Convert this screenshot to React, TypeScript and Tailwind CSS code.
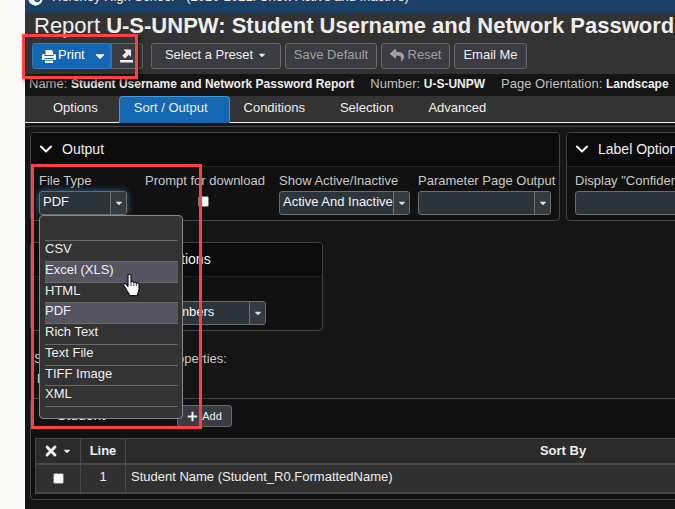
import { useState } from 'react';
import type { ReactNode } from 'react';
import { FaCaretDown, FaReply, FaPlus, FaTimes } from 'react-icons/fa';
import { ChevronDown } from 'lucide-react';

const fileTypes = ['', 'CSV', 'Excel (XLS)', 'HTML', 'PDF', 'Rich Text', 'Text File', 'TIFF Image', 'XML'];
const tabs = ['Options', 'Sort / Output', 'Conditions', 'Selection', 'Advanced'];

const btn = 'flex h-[26px] items-center justify-center whitespace-nowrap rounded-[3px] border border-[#66666b] bg-[#3b3b42]';

function PrinterIcon() {
  return (
    <svg viewBox="0 0 14 13" className="h-[13px] w-[14px] shrink-0" fill="currentColor">
      <path d="M3.500 0h6L11 1.500V5H3.500z" />
      <path d="M1.500 4H2.500V6h9V4h1A1.500 1.500 0 0 1 14 5.500V10h-2.500V8h-9v2H0V5.500A1.500 1.500 0 0 1 1.500 4z" />
      <path d="M3 9h8v1.300H3zM3 11h8v2H3z" />
    </svg>
  );
}

function ExportIcon() {
  return (
    <svg viewBox="0 0 13 14" className="h-[14px] w-[13px]" fill="currentColor">
      <path d="M3.500 0.500H11V8L8.700 5.800 5 9.500 2.300 6.800 6 3.100z" />
      <path d="M0 11h13v2.500H0z" />
    </svg>
  );
}

function HandCursor() {
  return (
    <svg viewBox="0 0 18 24" className="pointer-events-none absolute left-[123px] top-[273px] z-30 h-6 w-[18px]">
      <path
        d="M5 2.500C5 .6 8 .6 8 2.500V9c.5-.9 2.600-.7 2.800.5.700-.8 2.400-.5 2.600.8.900-.7 2.600-.2 2.600 1.300v5c0 2-1.500 3.500-1.500 6H6.500c0-2-2.300-4-3.300-6.200L.8 12.600c-.8-1.700 1.200-2.900 2.400-1.500L5 13.400z"
        fill="#fff"
        stroke="#15152a"
        strokeWidth="1.200"
        strokeLinejoin="round"
      />
      <path d="M8 9v4M10.800 10v3M13.400 11v2" stroke="#15152a" strokeWidth="0.8" />
    </svg>
  );
}

function Panel({ title, className, children }: { title: string; className: string; children: ReactNode }) {
  return (
    <section className={`shrink-0 rounded-[4px] border border-[#444] bg-[#111] ${className}`}>
      <h2 className="flex h-[34px] items-center gap-1.5 rounded-t-[3px] border-b border-[#222] bg-[#0b0b0b] pb-0.5 pl-[5px] text-[14px] text-[#f0f0f0]">
        <ChevronDown className="h-5 w-5" strokeWidth={2.5} />
        {title}
      </h2>
      <div className="flex gap-2 px-2 pb-[5px] pt-1">{children}</div>
    </section>
  );
}

function SelectField({ id, label, value, width, active }: { id: string; label: string; value: string; width: string; active?: boolean }) {
  return (
    <div className="shrink-0">
      <label htmlFor={id} className="block h-5 whitespace-nowrap leading-5 text-[#c8c8c8]">{label}</label>
      <div className={`relative ${width} ${active ? 'rounded-[3px] shadow-[0_0_7px_#35658f]' : ''}`}>
        <select id={id} defaultValue={value} className="block h-6 w-full appearance-none rounded-[3px] border border-[#6d6d6d] bg-[#2b333b] pb-0.5 pl-[3px] pr-4 text-[#f4f4f4]">
          <option>{value}</option>
        </select>
        <span className="pointer-events-none absolute inset-y-px right-px flex w-4 items-center justify-center rounded-r-[2px] border-l border-[#6d6d6d] bg-[#343a41]">
          <FaCaretDown className="h-2.5 w-2.5 text-[#ddd]" />
        </span>
      </div>
    </div>
  );
}

export default function App() {
  const [tab, setTab] = useState('Sort / Output');
  const [fileType, setFileType] = useState('PDF');

  return (
    <div className="relative flex min-h-screen overflow-hidden bg-[#fafaf9] font-['Liberation_Sans',Arial,sans-serif] text-[13px] leading-4 text-[#eee]">
      <main className="ml-[25px] min-w-[986px] flex-1 bg-[#151515]">
        <header className="flex h-[13px] items-end overflow-hidden bg-[#1b4066]">
          <div className="flex h-[22px] items-start pl-0.5">
            <svg viewBox="0 0 18 18" className="h-4 w-[17px]">
              <circle cx="9" cy="8.500" r="8" fill="#f4f4f4" />
              <path d="M5 9c1-6 10-7 9-1s-7 3-5 0" fill="none" stroke="#1b4066" strokeWidth="2" />
            </svg>
          </div>
          <p className="flex h-6 gap-3 whitespace-nowrap pl-2 leading-4">
            <span>Hershey High School</span>
            <span>(2020-2021: Show Active and Inactive)</span>
          </p>
        </header>

        <div className="bg-[#333] pb-[5px]">
          <h1 className="h-[30px] whitespace-nowrap pl-[9px] text-[22px] leading-[26px]">
            Report <b>U-S-UNPW: Student Username and Network Password</b>
          </h1>
          <div className="flex gap-1 pl-[7px]">
            <div className="mr-1 flex">
              <button className="flex h-[26px] w-[79px] items-center rounded-l-[3px] border border-[#2d79bd] bg-[#1567b3] pl-[9px] text-white">
                <PrinterIcon />
                <span className="ml-0.5 pb-0.5">Print</span>
                <FaCaretDown className="ml-2 h-3.5 w-3.5" />
              </button>
              <button aria-label="Export" className="flex h-[26px] w-8 items-center rounded-r-[3px] border border-[#66666b] bg-[#3b3b42] pl-2">
                <ExportIcon />
              </button>
            </div>
            <button className={`${btn} w-[130px] gap-1 pb-0.5`}>Select a Preset <FaCaretDown className="h-2.5 w-2.5" /></button>
            <button className={`${btn} w-[92px] pb-0.5 text-[#a0a0a0]`}>Save Default</button>
            <button className={`${btn} w-[69px] gap-1 pb-0.5 text-[#a0a0a0]`}><FaReply className="h-3.5 w-3.5" />Reset</button>
            <button className={`${btn} w-[73px] pb-0.5`}>Email Me</button>
          </div>
        </div>

        <p className="flex h-[22px] items-center gap-4 whitespace-nowrap pb-0.5 pl-1 text-[#c0c0c0]">
          <span>Name: <b className="text-[12px] text-[#eee]">Student Username and Network Password Report</b></span>
          <span>Number: <b className="text-[12px] text-[#eee]">U-S-UNPW</b></span>
          <span>Page Orientation: <b className="text-[12px] text-[#eee]">Landscape</b></span>
        </p>

        <nav className="flex h-[27px] border-b border-[#eee] bg-[#333] pl-[14px]">
          {tabs.map(t => (
            <button
              key={t}
              onClick={() => setTab(t)}
              className={`h-[27px] whitespace-nowrap rounded-t-[4px] pb-1 pl-[14px] pr-[21px] ${t === tab ? 'border-x border-t border-[#4b97d6] bg-[#1567b3]' : ''}`}
            >
              {t}
            </button>
          ))}
        </nav>

        <div className="mt-[3px] border-t border-[#444] px-[5px] pt-[5px]">
          <div className="flex gap-1.5">
            <Panel title="Output" className="w-[530px]">
              <div className="w-[98px] shrink-0">
                <SelectField id="file-type" label="File Type" value={fileType} width="w-[88px]" active />
              </div>
              <div className="flex w-[126px] shrink-0 flex-col items-start">
                <label htmlFor="prompt" className="h-5 whitespace-nowrap leading-5 text-[#c8c8c8]">Prompt for download</label>
                <input id="prompt" type="checkbox" className="ml-[53px] mt-[5px] h-[11px] w-[11px] appearance-none rounded-[2px] border border-[#777] bg-white" />
              </div>
              <SelectField id="active" label="Show Active/Inactive" value="Active And Inactive" width="w-[131px]" />
              <SelectField id="param-page" label="Parameter Page Output" value="" width="w-[133px]" />
            </Panel>
            <Panel title="Label Options" className="w-[380px]">
              <SelectField id="confidential" label={'Display "Confidential" Label'} value="" width="w-[200px]" />
            </Panel>
          </div>

          <Panel title="School Number Options" className="mt-[21px] w-[293px]">
            <SelectField id="numbers" label="Student Numbers" value="Show All Student ID Numbers" width="w-[227px]" />
          </Panel>

          <div className="h-[67px] pl-1 pt-5 text-[#c8c8c8]">
            <p>Selected Student Sort Properties:</p>
            <p className="mt-1 pl-[3px] text-[#eee]">None</p>
          </div>

          <section className="rounded-[4px] border border-[#444] bg-[#111] px-1 pb-[5px]">
            <div className="flex h-[39px] items-start pt-1.5">
              <h2 className="flex w-[142px] items-center gap-1 pl-1.5 pt-0.5 text-[14px]">
                <ChevronDown className="h-3 w-3" strokeWidth={3} />Student
              </h2>
              <button className="flex h-[22px] w-[55px] items-center justify-center gap-1 rounded-[3px] border border-[#66666b] bg-[#3b3b42] text-[11px]">
                <FaPlus className="h-[11px] w-[11px]" />Add
              </button>
            </div>
            <table className="w-full table-fixed border-collapse">
              <thead>
                <tr className="h-[25px] bg-[#2b2b2b]">
                  <th className="w-[45px] border border-b-2 border-[#484848]">
                    <button className="mx-auto flex items-center gap-1" aria-label="Remove">
                      <FaTimes className="h-4 w-3.5" /><FaCaretDown className="h-2.5 w-2.5" />
                    </button>
                  </th>
                  <th className="w-[45px] border border-b-2 border-[#484848]">Line</th>
                  <th className="border border-b-2 border-[#484848]">Sort By</th>
                </tr>
              </thead>
              <tbody>
                <tr className="h-[29px] bg-[#303030]">
                  <td className="border border-b-2 border-[#484848]">
                    <input type="checkbox" aria-label="Select line 1" className="mx-auto block h-[11px] w-[11px] appearance-none rounded-[2px] border border-[#777] bg-white" />
                  </td>
                  <td className="border border-b-2 border-[#484848] pb-0.5 text-center">1</td>
                  <td className="border border-b-2 border-[#484848] pb-0.5 pl-[5px]">Student Name (Student_R0.FormattedName)</td>
                </tr>
              </tbody>
            </table>
          </section>
        </div>
      </main>

      {/* open file type list */}
      <div className="absolute left-[39px] top-[215px] z-10 w-[144px] rounded-[4px] border border-[#888] bg-[#333] pb-[11px] pl-[5px] pr-1">
        <ul role="listbox" aria-label="File Type" className="grid h-[191px] grid-rows-[25px_repeat(8,1fr)]">
          {fileTypes.map(t => (
            <li
              key={t}
              role="option"
              aria-selected={t === fileType}
              onClick={() => setFileType(t)}
              className={`border-b border-[#6a6a6a] ${t === fileType || t === 'Excel (XLS)' ? 'bg-[#555460]' : ''}`}
            >
              {t}
            </li>
          ))}
        </ul>
      </div>

      <HandCursor />

      {/* callout frames */}
      <div className="pointer-events-none absolute left-[22px] top-[34px] z-20 h-[45px] w-[116px] border-[3px] border-[#fb4141] shadow-[2px_3px_4px_rgba(0,0,0,0.5)]" />
      <div className="pointer-events-none absolute left-[31px] top-[164px] z-20 h-[265px] w-[171px] border-[3px] border-[#fb4141]" />
    </div>
  );
}
